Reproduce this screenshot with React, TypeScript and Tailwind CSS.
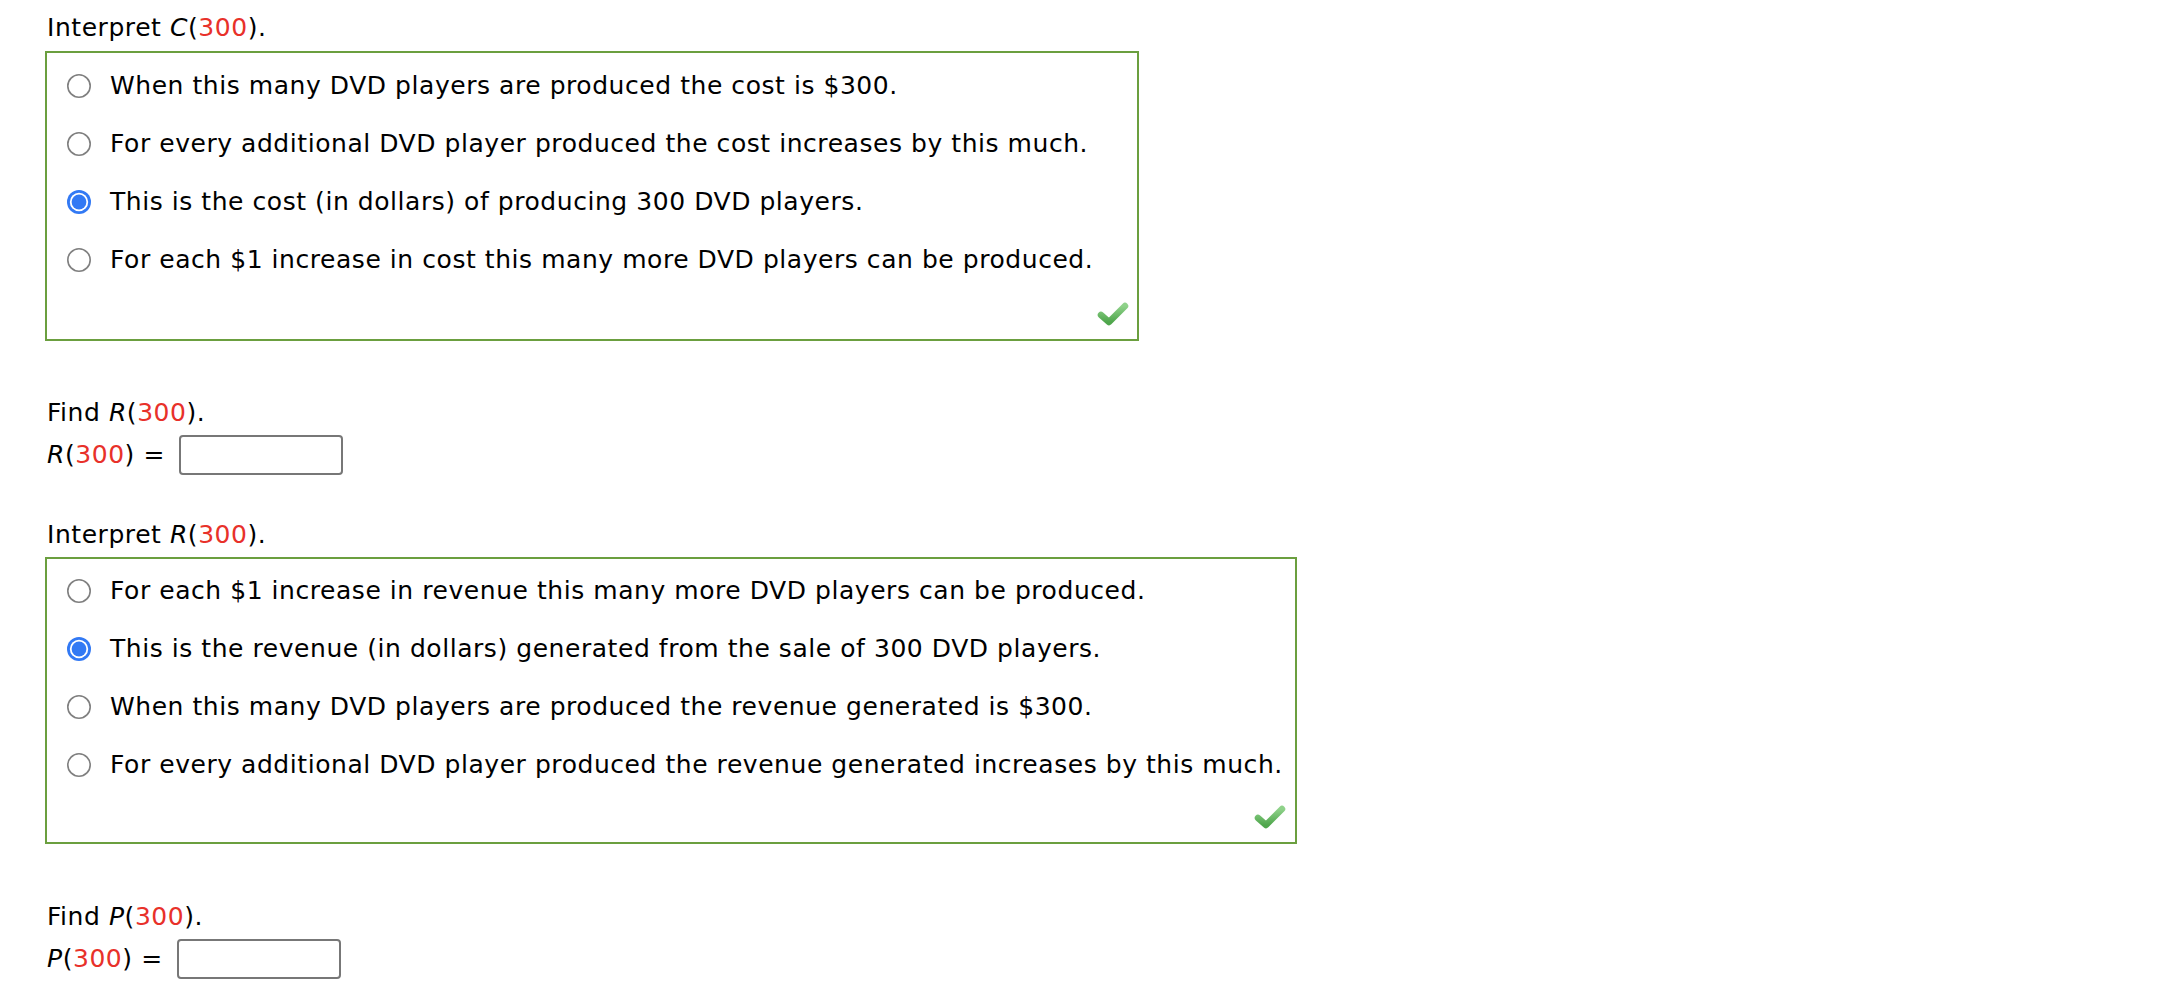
import React from "react";

const Red = ({ children }: { children: React.ReactNode }) => (
  <span className="text-[#e8312a]">{children}</span>
);

const Fn = ({ f }: { f: string }) => (
  <>
    <i>{f}</i>(<Red>300</Red>)
  </>
);

const Radio = ({ checked }: { checked?: boolean }) =>
  checked ? (
    <svg width="26" height="26" viewBox="0 0 26 26" className="shrink-0">
      <circle cx="13" cy="13" r="12" fill="#3279f4" />
      <circle cx="13" cy="13" r="9.2" fill="#ffffff" />
      <circle cx="13" cy="13" r="7.4" fill="#3279f4" />
    </svg>
  ) : (
    <svg width="26" height="26" viewBox="0 0 26 26" className="shrink-0">
      <circle cx="13" cy="13" r="11.2" fill="#ffffff" stroke="#7f7f7f" strokeWidth="1.6" />
    </svg>
  );

const Check = () => (
  <svg width="32" height="26" viewBox="0 0 32 26">
    <defs>
      <linearGradient id="cg" x1="0" y1="0" x2="0" y2="1">
        <stop offset="0" stopColor="#8fd28a" />
        <stop offset="1" stopColor="#4fa64c" />
      </linearGradient>
    </defs>
    <path
      d="M4 14 L12 21 L28 5"
      fill="none"
      stroke="url(#cg)"
      strokeWidth="6.5"
      strokeLinecap="round"
      strokeLinejoin="round"
    />
  </svg>
);

const Options = ({
  items,
  selected,
  width,
  ptTop,
  checkPt,
  checkPr,
  bottomH,
}: {
  items: string[];
  selected: number;
  width: string;
  ptTop: string;
  checkPt: string;
  checkPr: string;
  bottomH: string;
}) => (
  <div className={`border-2 border-[#6b9f3f] ${width} ${ptTop}`}>
    {items.map((t, i) => (
      <div key={i} className="flex h-[58px] items-center pl-[19px]">
        <Radio checked={i === selected} />
        <span className="ml-[18px] whitespace-nowrap">{t}</span>
      </div>
    ))}
    <div className={`flex justify-end ${bottomH} ${checkPt} ${checkPr}`}>
      <Check />
    </div>
  </div>
);

const AnswerRow = ({ f }: { f: string }) => (
  <div className="flex h-[48px] items-center">
    <span className="ml-[2px]">
      <Fn f={f} /> =
    </span>
    <div className="ml-[14px] h-[40px] w-[164px] rounded-[4px] border-2 border-[#777777] bg-white" />
  </div>
);

export default function App() {
  return (
    <div
      className="min-h-screen bg-white pl-[45px] pt-[10px] text-[25px] leading-[36px] tracking-[0.55px] text-black"
      style={{ fontFamily: '"DejaVu Sans", Verdana, sans-serif' }}
    >
      <div className="ml-[2px]">
        Interpret <Fn f="C" />.
      </div>
      <div className="mt-[5px]">
        <Options
          width="w-[1094px]"
          ptTop="pt-[4px]"
          checkPt="pt-[12px]"
          checkPr="pr-[8px]"
          bottomH="h-[50px]"
          selected={2}
          items={[
            "When this many DVD players are produced the cost is $300.",
            "For every additional DVD player produced the cost increases by this much.",
            "This is the cost (in dollars) of producing 300 DVD players.",
            "For each $1 increase in cost this many more DVD players can be produced.",
          ]}
        />
      </div>

      <div className="ml-[2px] mt-[54px]">
        Find <Fn f="R" />.
      </div>
      <AnswerRow f="R" />

      <div className="ml-[2px] mt-[38px]">
        Interpret <Fn f="R" />.
      </div>
      <div className="mt-[4px]">
        <Options
          width="w-[1252px]"
          ptTop="pt-[3px]"
          checkPt="pt-[10px]"
          checkPr="pr-[9px]"
          bottomH="h-[48px]"
          selected={1}
          items={[
            "For each $1 increase in revenue this many more DVD players can be produced.",
            "This is the revenue (in dollars) generated from the sale of 300 DVD players.",
            "When this many DVD players are produced the revenue generated is $300.",
            "For every additional DVD player produced the revenue generated increases by this much.",
          ]}
        />
      </div>

      <div className="ml-[2px] mt-[55px]">
        Find <Fn f="P" />.
      </div>
      <AnswerRow f="P" />
    </div>
  );
}
